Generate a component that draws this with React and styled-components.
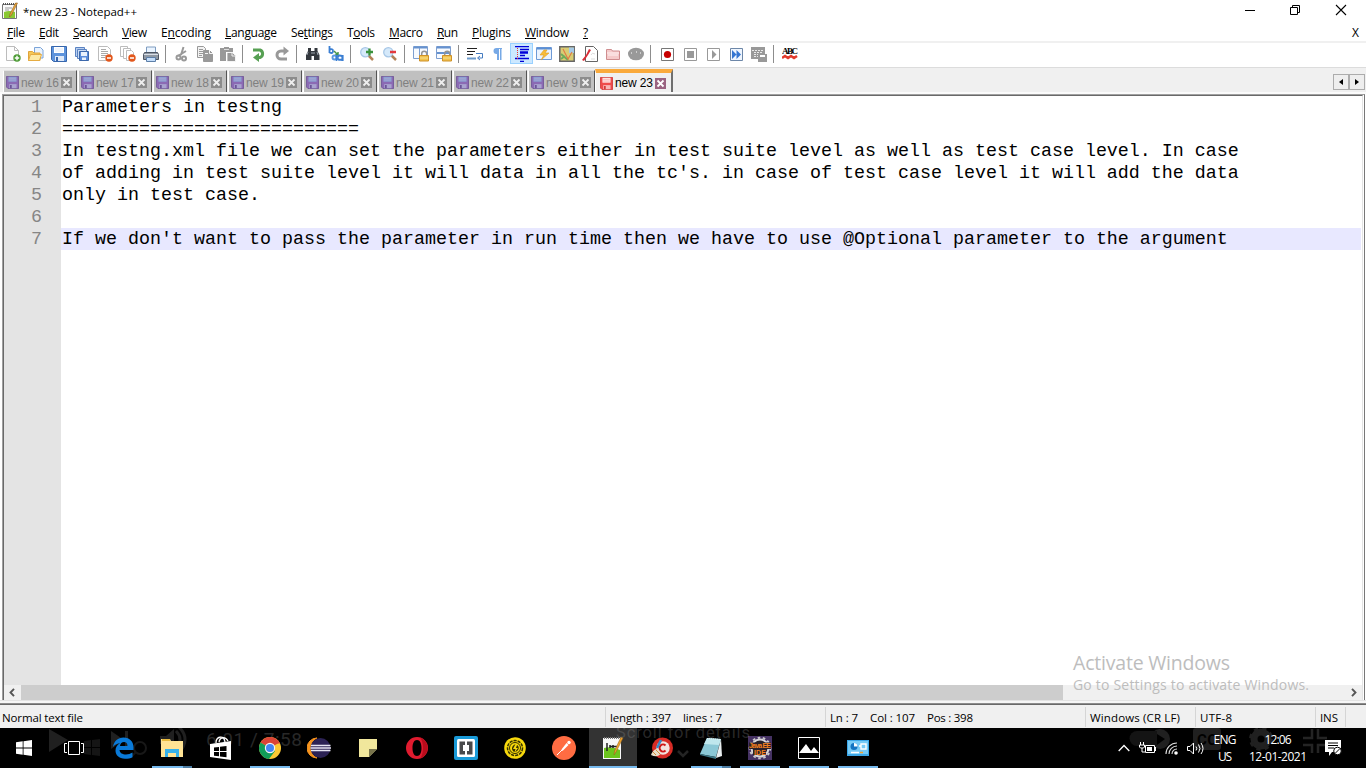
import React, { useLayoutEffect, useRef } from "react";
import styled, { createGlobalStyle, css } from "styled-components";

const UI = '"Open Sans", "Noto Sans", sans-serif';

const Global = createGlobalStyle`
  * { box-sizing: border-box; }
  html, body { margin: 0; padding: 0; overflow: hidden; background: #fff; }
  svg { display: block; flex: none; }
`;

const Screen = styled.div`
  position: relative;
  width: 1366px;
  height: 768px;
  overflow: hidden;
  display: flex;
  flex-direction: column;
  background: #fff;
  font: 12px/16px ${UI};
  color: #000;
`;

const FitBox = styled.span`
  display: inline-block;
  flex: none;
  white-space: pre;
  width: ${(p) => p.$w}px;
`;

/* Text that tracks itself to fill an exact width. */
function Fit({ w, children }) {
  const ref = useRef(null);
  useLayoutEffect(() => {
    const el = ref.current;
    el.style.letterSpacing = "0px";
    const natural = el.getBoundingClientRect().width;
    const n = Math.max(1, el.textContent.length - 1);
    el.style.letterSpacing = `${(w - natural) / n}px`;
  }, [w, children]);
  return (
    <FitBox $w={w}>
      <span ref={ref}>{children}</span>
    </FitBox>
  );
}

/* ---------- title and menu ---------- */
const TitleBar = styled.header`
  height: 22px;
  flex: none;
  display: flex;
  align-items: center;
  padding: 0 19px 0 2px;
`;
const TitleText = styled.div`
  margin: 2px auto 0 5px;
  font-size: 11.5px;
`;
const WindowButtons = styled.div`
  display: flex;
  gap: 34px;
  padding-bottom: 2px;
`;
const MenuBar = styled.nav`
  height: 21px;
  flex: none;
  display: flex;
  align-items: flex-start;
  padding: 3px 7px 0;
  gap: 14px;
  border-bottom: 2px solid #f0f0f0;
  font-size: 12px;
`;
const Key = styled.span`
  border-bottom: 1px solid #000;
  display: inline-block;
  height: 14px;
  line-height: 16px;
`;
const DocClose = styled.div`
  margin-left: auto;
`;

/* ---------- toolbar ---------- */
const Toolbar = styled.div`
  height: 25px;
  flex: none;
  display: flex;
  padding-left: 2px;
  border-bottom: 1px solid #dcdcdc;
`;
const Tool = styled.div`
  width: 23px;
  height: 21px;
  display: flex;
  align-items: center;
  justify-content: center;
  padding-right: 1px;
  ${(p) =>
    p.$on &&
    css`
      padding-right: 0;
      background: #cce8ff;
      border: 1px solid #99d1ff;
    `}
`;
const Sep = styled.div`
  width: 8px;
  height: 20px;
  padding: 2px 0 0 2px;
  &::before {
    content: "";
    display: block;
    width: 1px;
    height: 18px;
    background: #8d8d8d;
  }
`;

const Svg = ({ w = 16, h = 16, vb, children }) => (
  <svg width={w} height={h} viewBox={vb || `0 0 ${w} ${h}`} fill="none">
    {children}
  </svg>
);

const Floppy = ({ s = 16, body, dark, label = "#fff", metal = "#dfe9f8" }) => (
  <svg width={s} height={s} viewBox="0 0 16 16" fill="none">
    <path d="M.5.5h15v15H2.5l-2-2z" fill={body} stroke={dark} />
    <path d="M3 1h10v6H3z" fill={label} />
    <path d="M4 3h8M4 5h8" stroke={metal} />
    <path d="M4 10h9v5H4z" fill={metal} />
    <path d="M5 11h2v4H5z" fill={dark} />
  </svg>
);

const Minus = ({ x = 12, y = 12 }) => (
  <>
    <circle cx={x} cy={y} r="3.7" fill="#e2571c" />
    <path d={`M${x - 2} ${y}h4`} stroke="#fff" strokeWidth="1.5" />
  </>
);
const Lens = ({ plus }) => (
  <Svg>
    <path d="M9 9l5 5" stroke="#b38258" strokeWidth="2.5" />
    <circle cx="6.3" cy="6.3" r="4.6" fill="#d5e9fa" stroke="#a7c7e7" strokeWidth="1.3" />
    {plus ? (
      <path d="M10.5 2.5v7M7 6h7" stroke="#39923c" strokeWidth="2.3" />
    ) : (
      <path d="M8 6h6" stroke="#e3393d" strokeWidth="2.5" />
    )}
  </Svg>
);
const Lock = () => (
  <>
    <path d="M8.7 10V7.7a2.5 2.5 0 015 0V10" stroke="#949494" strokeWidth="1.5" />
    <path d="M6.5 9.5h9v5.5h-9z" fill="#f1c24c" stroke="#ce9128" />
    <path d="M7 12h8" stroke="#f9df8d" />
  </>
);
const G = "#999";

const toolGroups = [
  [
    <Svg>
      <path d="M1.5.5h8l4 4v10h-12z" fill="#fdfdfd" stroke="#bcbcbc" />
      <path d="M9.500.5v4h4" stroke="#bcbcbc" />
      <circle cx="12" cy="12" r="3.7" fill="#4d9b35" />
      <path d="M12 9.800v4.400M9.800 12h4.400" stroke="#fff" strokeWidth="1.4" />
    </Svg>,
    <Svg>
      <path d="M6.500 1.500h6l2.500 2.500v8h-8.500z" fill="#e9f2fd" stroke="#7ba4d8" />
      <path d="M.5 14.500v-9h4l1.500 1.500h6v7.500z" fill="#f5c758" stroke="#e0a43a" />
      <path d="M.5 14.500l2-6h11l-2 6z" fill="#fde9a6" stroke="#e6ac42" />
    </Svg>,
    <Floppy body="#5d93dc" dark="#3766ac" />,
    <Svg>
      <path d="M1.500 1.500h9v9h-9z" fill="#b9cff0" stroke="#5b83c2" />
      <path d="M3.500 3.500h9v9h-9z" fill="#cadcf5" stroke="#5b83c2" />
      <path d="M5.500 5.500h9v9h-9z" fill="#5b8ddb" stroke="#3d68ab" />
      <path d="M7 6h6v4H7zM8 11.500h4V14H8z" fill="#e9f1fc" />
    </Svg>,
    <Svg>
      <path d="M1.500.5h9l3 3v11h-12z" fill="#fff" stroke="#bcbcbc" />
      <path d="M4 3.500h5M4 5.500h7M4 7.500h7M4 9.500h5M4 11.500h4" stroke="#aaa" />
      <Minus />
    </Svg>,
    <Svg>
      <path d="M.5.5h7v10h-7z" fill="#fff" stroke="#bcbcbc" />
      <path d="M3.500 2.500h7v10h-7z" fill="#fff" stroke="#bcbcbc" />
      <path d="M6.500 4.500h5l2 2v8h-7z" fill="#fff" stroke="#bcbcbc" />
      <Minus />
    </Svg>,
    <Svg>
      <path d="M3.500 1h9v6h-9z" fill="#eaf4ff" stroke="#7e9cc0" />
      <path d="M1.500 6.500h13l1 2v5h-15v-5z" fill="#8f98a4" stroke="#4c5563" />
      <path d="M1 8.500h14" stroke="#d9dfe7" />
      <path d="M3.500 11.500h9v4h-9z" fill="#c5defb" stroke="#5d7fa8" />
    </Svg>,
  ],
  [
    <Svg>
      <path d="M9.500 1L7 9M12 5l-8 5" stroke={G} strokeWidth="2" />
      <circle cx="4.500" cy="11.500" r="2" stroke={G} strokeWidth="2" />
      <circle cx="10" cy="12.500" r="2" stroke={G} strokeWidth="2" />
    </Svg>,
    <Svg>
      <path d="M.5.5h6l2 2v9h-8z" fill="#f2f2f2" stroke={G} />
      <path d="M2 3.500h4M2 5.500h4M2 7.500h4M2 9.500h3" stroke={G} />
      <path d="M6.500 4.500h6l3 3v8h-9z" fill={G} stroke={G} />
      <path d="M12.500 4v3.500H16M8 7.500h3" stroke="#f4f4f4" />
    </Svg>,
    <Svg>
      <path d="M0 2h4V1h5v1h4v4H6v9H0z" fill={G} />
      <path d="M4 3.500h5" stroke="#ddd" />
      <path d="M7 6.500h5.500l3 3V15.500H7z" fill={G} stroke="#fff" strokeWidth=".8" />
      <path d="M12 6.500V10h4" stroke="#eee" />
    </Svg>,
  ],
  [
    <Svg>
      <path d="M2 4h7a4 4 0 010 7.500H6" stroke="#57a053" strokeWidth="3" />
      <path d="M8 7v9l-6-4.500z" fill="#57a053" />
    </Svg>,
    <Svg>
      <path d="M13 13H7a4 4 0 010-8h4" stroke={G} strokeWidth="3" />
      <path d="M9.500.5v9L15 5z" fill={G} />
    </Svg>,
  ],
  [
    <Svg>
      <path d="M3 2h3v3h3.500V2h3v3l2 4v5H9v-4H6.500v4H1V9l2-4z" fill="#34383e" />
      <path d="M3 6l-1 3M12 6l1 3M6 7h4" stroke="#9ba3ad" />
    </Svg>,
    <Svg>
      <path d="M1.500 0v7M1.500 4q3.500-2 3.500 1t-3.500 1.500" stroke="#3b7fd3" strokeWidth="1.800" />
      <path d="M6 5l4 4m0-3v3H7" stroke="#47954b" strokeWidth="1.500" />
      <path d="M14.500 9v6M14 10q-4-1.500-4.500 1.500t5 2" stroke="#3b7fd3" strokeWidth="2.200" />
      <circle cx="6.500" cy="11.500" r="2" stroke="#5d9ae0" strokeWidth="1.900" />
      <path d="M8.500 9v6" stroke="#3b7fd3" strokeWidth="1.600" />
    </Svg>,
  ],
  [<Lens plus />, <Lens />],
  [
    <Svg>
      <path d="M.5.5h14v12H.5z" fill="#f7faff" stroke="#7d9fd0" />
      <path d="M1 1.500h13" stroke="#6692cf" strokeWidth="2" />
      <path d="M6.500 2v10" stroke="#7d9fd0" />
      <Lock />
    </Svg>,
    <Svg>
      <path d="M.5.5h14v12H.5z" fill="#f7faff" stroke="#7d9fd0" />
      <path d="M1 1.500h13M1 7h13" stroke="#6692cf" strokeWidth="2" />
      <Lock />
    </Svg>,
  ],
  [
    <Svg>
      <path d="M0 2.500h10M0 5.500h8M0 8.500h6" stroke="#222" strokeWidth="1.200" />
      <path d="M9 7.500h6.500V12H11m2-2l-2.500 2 2.500 2" stroke="#457cc1" />
      <path d="M0 12.500h9" stroke="#6c9acb" strokeWidth="2" />
    </Svg>,
    <Svg>
      <path d="M12 2H6.500a3 3 0 000 6H7v6h2V3h1v11h1.500V3h.5z" fill="#77a9e6" />
    </Svg>,
    <Svg>
      <path d="M1 .5h14M6 3.500h9M6 9.500h5M1 12.500h14M6 15.500h4" stroke="#0000d8" strokeWidth="1.500" />
      <path d="M6 6.500h8" stroke="#0000d8" strokeWidth="2.500" />
      <path d="M3.500 2v11" stroke="#e33" strokeDasharray="1 1" />
    </Svg>,
    <Svg>
      <path d="M.5 1.500h15v12H.5z" fill="#eaf3ff" stroke="#6e9ad6" />
      <path d="M1 2.500h14" stroke="#5b8fd4" strokeWidth="2" />
      <path d="M8 4L4 9h4l-3 5 8-7H9l2-3z" fill="#f8bd38" stroke="#df9a22" strokeWidth=".6" />
    </Svg>,
    <Svg>
      <path d="M.8.8h14.400v14.400H.8z" fill="#d9cd74" stroke="#666" strokeWidth="1.500" />
      <path d="M10 1.500h5V7h-5z" fill="#a5c9e6" />
      <path d="M2 8l7 6M2 13l4-3" stroke="#6eab5b" strokeWidth="2" />
      <path d="M4 3l5 10 4-7" stroke="#e07a46" strokeWidth="1.100" />
    </Svg>,
    <Svg>
      <path d="M3.500.5h8l4 4v11h-12z" fill="#fff" stroke="#666" />
      <path d="M0 14l4-5 3-6 2 1-3 5-4 6z" fill="#d92d36" />
      <path d="M9 9q1-3 4-1M9 13h4" stroke="#ddd" />
    </Svg>,
    <Svg>
      <path d="M1.500 13.500v-10h5l1 1.500h7v8.500z" fill="#f5caca" stroke="#cf8d8f" />
      <path d="M2 7h12M3 9h10" stroke="#fff2f2" />
    </Svg>,
    <Svg>
      <ellipse cx="8" cy="8" rx="8" ry="6.300" fill={G} />
      <path d="M3 7h1M8 6h1M12 7h1" stroke="#fff" />
    </Svg>,
  ],
  [
    <Svg><path d="M2.500 2.500h12v12h-12z" fill="#fff" stroke="#777" /><circle cx="8.500" cy="8.500" r="3.600" fill="#c80000" /></Svg>,
    <Svg><path d="M2.500 2.500h12v12h-12z" fill="#fff" stroke="#999" /><path d="M5 5h7v7H5z" fill={G} /></Svg>,
    <Svg><path d="M2.500 2.500h12v12h-12z" fill="#fff" stroke="#999" /><path d="M7 4v9l4.500-4.500z" fill={G} /></Svg>,
    <Svg><path d="M2.500 2.500h12v12h-12z" fill="#eff6ff" stroke="#6d87a8" /><path d="M4 4v9l4.500-4.500zM8.500 4v9L13 8.500z" fill="#3576d2" /></Svg>,
    <Svg>
      <path d="M0 1h14v12H0z" fill={G} />
      <path d="M1 4.500h12M3 6.500h8M3 8.500h4M3 10.500h4" stroke="#e9e9e9" strokeDasharray="2 1" />
      <path d="M7 8h9v8H7z" fill={G} /><path d="M9 9h5v2H9z" fill="#fff" />
    </Svg>,
  ],
  [
    <Svg>
      <text x="0" y="8" textLength="16" fontFamily="Liberation Serif, serif" fontWeight="700" fontSize="9" fill="#000">ABC</text>
      <path d="M0 12l3-2 3 2 3-2 3 2 3-2" stroke="#e23a2c" strokeWidth="2.600" />
    </Svg>,
  ],
];

/* ---------- tabs ---------- */
const TabStrip = styled.div`
  height: 26px;
  flex: none;
  display: flex;
  align-items: flex-end;
  background: #f0f0f0;
  border-bottom: 2px solid #fbfbfb;
  padding: 0 1px 0 3px;
  font: 12px/14px "Liberation Sans", sans-serif;
`;
const Tab = styled.div`
  width: ${(p) => p.$w}px;
  height: 22px;
  display: flex;
  align-items: center;
  padding: 2px 0 0 2px;
  gap: 2px;
  color: #808080;
  background: #c0c0c0;
  border-left: 1px solid #fff;
  border-top: 1px solid #e2e2e2;
  border-right: 1px solid #555;
  margin-right: ${(p) => p.$gap ?? 2}px;
  ${(p) =>
    p.$active &&
    css`
      height: 23px;
      padding: 1px 0 0 4px;
      color: #000;
      background: #f0f0f0;
      border-top: 4px solid #faaa3c;
      border-right: 2px solid #6f6f6f;
    `}
`;
const CloseBox = ({ active }) => (
  <svg width="11" height="11" viewBox="0 0 11 11">
    <rect width="11" height="11" fill={active ? "#9a6381" : "#8c8c8c"} />
    <path d="M2.500 2.500l6 6m0-6l-6 6" stroke={active ? "#fff" : "#eee"} strokeWidth="1.800" />
  </svg>
);
const TabArrows = styled.div`
  display: flex;
  margin: 0 0 2px auto;
`;
const ArrowBtn = styled.div`
  width: 16px;
  height: 16px;
  border: 1px solid #acacac;
  background: #eee;
  display: flex;
  align-items: center;
  justify-content: center;
`;

/* ---------- editor ---------- */
const EditorFrame = styled.main`
  flex: 1;
  margin: 0 1px 0 2px;
  border: 1px solid #a0a0a0;
  border-right-color: #777;
  border-bottom: 0;
  display: flex;
  padding-right: 1px;
`;
const EditorInner = styled.div`
  flex: 1;
  border: 1px solid #696969;
  border-right: 1px solid #e3e3e3;
  border-bottom: 0;
  display: flex;
  flex-direction: column;
`;
const Lines = styled.div`
  flex: 1;
  font: 18.333px/22px "Liberation Mono", monospace;
  background: linear-gradient(90deg, #e4e4e4 57px, #fff 57px);
`;
const Line = styled.div`
  display: flex;
  height: 22px;
  line-height: 23px;
  white-space: pre;
  padding-right: 1px;
`;
const Num = styled.span`
  width: 57px;
  padding-right: 19px;
  text-align: right;
  color: #868686;
`;
const Code = styled.span`
  flex: 1;
  height: 22px;
  padding-left: 1px;
  background: ${(p) => (p.$current ? "#e8e8ff" : "#fff")};
`;
const HScroll = styled.div`
  height: 15px;
  flex: none;
  display: flex;
  align-items: center;
  background: #f0f0f0;
`;
const ScrollBtn = styled.div`
  width: ${(p) => p.$w}px;
  display: flex;
  justify-content: center;
`;
const Thumb = styled.div`
  width: 1042px;
  height: 15px;
  background: #cdcdcd;
  margin-right: auto;
`;
const FrameBottom = styled.div`
  height: 5px;
  flex: none;
  background: linear-gradient(#e3e3e3 1px, #f6f6f6 1px 3px, #8c8c8c 3px 4px, #696969 4px);
`;

/* ---------- status ---------- */
const Status = styled.footer`
  height: 23px;
  flex: none;
  display: flex;
  align-items: center;
  background: #f0f0f0;
  font-size: 11.500px;
`;
const Cell = styled.div`
  width: ${(p) => p.$w}px;
  height: 20px;
  display: flex;
  align-items: center;
  gap: ${(p) => p.$gap || 0}px;
  padding: 2px 0 0 ${(p) => p.$pl ?? 4}px;
  border-right: 1px solid #d5d5d5;
`;

const Watermark = styled.div`
  position: absolute;
  left: 1073px;
  top: 650px;
  color: #bdbdbd;
  font-size: 14px;
  line-height: 20px;
`;
const WatermarkTitle = styled.div`
  font-size: 19.500px;
  line-height: 25px;
`;

/* ---------- taskbar ---------- */
const Taskbar = styled.div`
  position: relative;
  height: 40px;
  flex: none;
  display: flex;
  background: #000;
  overflow: hidden;
  color: #fff;
`;
const Ghost = styled.div`
  position: absolute;
  inset: 0;
`;
const TaskButton = styled.div`
  position: relative;
  width: ${(p) => p.$w || 49}px;
  height: 40px;
  display: flex;
  align-items: center;
  justify-content: center;
  padding-right: 1px;
  background: ${(p) => (p.$active ? "linear-gradient(90deg, #333 48px, transparent 48px)" : "none")};
  &::after {
    content: "";
    display: ${(p) => (p.$line ? "block" : "none")};
    position: absolute;
    bottom: 0;
    left: ${(p) => (p.$active ? 0 : 4)}px;
    width: ${(p) => (p.$active ? 48 : 40)}px;
    height: 2px;
    background: ${(p) =>
      p.$line === "multi" ? "linear-gradient(90deg, #76b9ed 31px, #4c7ca2 31px)" : "#76b9ed"};
  }
`;
const Tray = styled.div`
  position: relative;
  display: flex;
  align-items: center;
  margin-left: auto;
  padding-right: 3px;
`;
const TrayIcons = styled.div`
  display: flex;
  align-items: center;
  gap: 9px;
  margin-right: 9px;
`;
const TrayText = styled.div`
  width: ${(p) => p.$w}px;
  display: flex;
  flex-direction: column;
  align-items: center;
  font-size: 12px;
  line-height: 17px;
  padding-bottom: ${(p) => (p.$up ? 1 : 0)}px;
`;
const Notify = styled.div`
  margin: 0 21px 0 6px;
`;

const apps = [
  { w: 49, icon: <Svg><path d="M0 2.300l6.700-1V7.500H0zM7.500 1.200L16 0v7.500H7.500zM0 8.500h6.700v6.200L0 13.700zM7.500 8.500H16V16l-8.500-1.200z" fill="#fff" /></Svg> },
  { w: 50, icon: <Svg w={24} h={14}><path d="M6.500.5h11v13h-11zM5 2.500H2.500v9H5M19 2.500h2.500v9H19" stroke="#fff" /></Svg> },
  { icon: <Svg w={22} h={22}><path d="M1 10C2 4 6 .5 11.500.5 18 .5 21.500 5 21.500 10v3H7.500c.3 3 3 4.500 6.500 4.500 2.500 0 4.500-.7 6.500-2v4.700c-2 1-4.500 1.500-7.500 1.500-6 0-9.500-3.500-9.500-8.200 0-3.200 1.700-5.700 4.500-7.200C5.500 6.500 3 7.500 1 10zm7-1h7.500c0-2.500-1.200-4-3.500-4-2.200 0-3.700 1.500-4 4z" fill="#0a7ad8" fillRule="evenodd" /></Svg> },
  { line: "multi", icon: <Svg w={22} h={20}><path d="M0 1h9l1 2h12v16H0z" fill="#ffe394" /><path d="M1 1h8v2H1z" fill="#e7b93c" /><path d="M4 19v-8h14v8h-3v-4H7v4z" fill="#36b1ea" /></Svg> },
  { icon: <Svg w={22} h={24}><path d="M6 7C6 0 14-1 15 6M9 6c1-5 6-6 9-1" stroke="#fff" strokeWidth="1.300" /><path d="M0 8l21-3v19L0 21z" fill="#fff" /><path d="M4 11.500l5-.6V15H4zM10 10.700l6.500-.8V15H10zM4 16h5v4.300l-5-.6zM10 16h6.500v5.200L10 20.400z" fill="#000" /></Svg> },
  { line: 1, icon: <Svg w={22} h={22}><circle cx="11" cy="11" r="11" fill="#fcc934" /><path d="M11 11L1.500 5.500A11 11 0 0120.500 5.500z" fill="#db4437" /><path d="M11 11L1.500 5.500A11 11 0 0010 22l6-8z" fill="#109d58" /><path d="M11 6h9.800" stroke="#db4437" strokeWidth="1" /><circle cx="11" cy="11" r="5.200" fill="#f4f4f4" /><circle cx="11" cy="11" r="4" fill="#4285f4" /></Svg> },
  { icon: <Svg w={24} h={22}><path d="M10 1a10 10 0 000 20A11 11 0 0110 1z" fill="#f7941e" stroke="#f7941e" /><circle cx="13.500" cy="11" r="10" fill="#2c2255" /><path d="M4 8.500h19.500M3.500 11h20.500M4 13.500h19.500" stroke="#e7e5f3" strokeWidth="1.300" /></Svg> },
  { icon: <Svg w={18} h={18}><path d="M0 0h18v10l-8 8H0z" fill="#f1e79c" /><path d="M10 18v-8h8z" fill="#77734b" /></Svg> },
  { icon: <Svg w={22} h={22}><path fillRule="evenodd" d="M11 0a11 11 0 100 22 11 11 0 000-22zm0 3c3 0 4.500 3.500 4.500 8S14 19 11 19s-4.500-3.500-4.500-8S8 3 11 3z" fill="#e01b2f" /><path d="M14 .5A11 11 0 0114 21.500C18 17 18 5 14 .5z" fill="#b80c1c" /></Svg> },
  { icon: <Svg w={24} h={24}><rect width="24" height="24" rx="2" fill="#199ad8" /><rect x="3" y="3" width="18" height="18" rx="1.500" fill="#fff" /><path d="M11 5.500H5.500v13H11v-3.500H9V9h2zM13 5.500h5.500v13H13v-3.500h2V9h-2z" fill="#48494b" /></Svg> },
  { icon: <Svg w={22} h={22}><circle cx="11" cy="11" r="10.800" fill="#f7d80c" /><circle cx="11" cy="11" r="7.500" stroke="#333000" strokeWidth="1.500" strokeDasharray="3.200 1" /><circle cx="11" cy="11" r="5.500" stroke="#333000" /><path d="M11.500 7c-5 2-4 7-1 8l1-3H9zM11 15c4-1 5-5 2-7l-1 3h2z" fill="#333000" /></Svg> },
  { icon: <Svg w={24} h={24}><circle cx="12" cy="12" r="12" fill="#ff6c42" /><path d="M5 19l6-6" stroke="#fff" /><path d="M9.500 13.500l5-6.500 2 2-6 6z" fill="#fff" /><circle cx="17" cy="6.500" r="1.700" fill="#fff" /></Svg> },
  { active: 1, line: 1, icon: <Svg w={22} h={24}><path d="M1 2h18v21H1z" fill="#f8f8f8" /><path d="M2 12q8-2 16 2v8H2z" fill="#6cc51d" /><path d="M2 2h17" stroke="#777" strokeWidth="2" strokeDasharray="1 1" /><path d="M5 7v8M8 9v3M11 9v3M8 10.500h7" stroke="#222" strokeWidth="1.500" /><path d="M21 2l-7 14-2 3 .5-4L19 1z" fill="#eea02c" stroke="#8b601d" strokeWidth=".5" /></Svg> },
  { icon: <Svg w={22} h={22}><circle cx="11.500" cy="11" r="10.500" fill="#d72b25" /><circle cx="12" cy="11" r="6.700" fill="#f3e3df" /><path d="M14.500 8.500a3.500 3.500 0 100 5" stroke="#cf1818" strokeWidth="2" /><path d="M0 18c2-5 4-6 7-6l3 4c-2 4-6 4-10 2z" fill="#e8dfc8" /><path d="M6 11l4-8" stroke="#3b88c7" strokeWidth="2.500" /><path d="M2 15l3 3M5 13l4 4" stroke="#d58a3b" /></Svg> },
  { line: "multi", icon: <Svg w={24} h={22}><path d="M8 1l14 1-5 18L1 17z" fill="#8bc8d6" /><path d="M8 1l14 1-2 6L5 7z" fill="#bfe7ed" /><path d="M22 2l1 17-6 2z" fill="#e9eff0" /><path d="M1 17l16 3v2L1 18z" fill="#3d7988" /><path d="M8 1.500l14 1" stroke="#e7f1f3" strokeDasharray="1 1" /></Svg> },
  { line: 1, icon: <Svg w={24} h={24}><path d="M0 0h24v24H0z" fill="#453263" /><circle cx="12" cy="12" r="8.500" fill="#24202b" stroke="#d9d7da" strokeWidth="2" /><circle cx="12" cy="12" r="10.300" stroke="#c9c7cb" strokeWidth="2" strokeDasharray="2.600 2.500" /><path d="M1 6.500h22v6.500H1zM5 13h13v6H5z" fill="#2a2029" /><text x="1" y="12" textLength="22" fontFamily="Liberation Sans, sans-serif" fontWeight="700" fontSize="7" fill="#f58220">Java EE</text><text x="6" y="18.500" textLength="12" fontFamily="Liberation Sans, sans-serif" fontWeight="700" fontSize="7" fill="#f58220">IDE</text></Svg> },
  { line: 1, icon: <Svg w={22} h={22}><path d="M.5.5h21v21H.5z" stroke="#fff" /><path d="M1 16l7-9 5 7 3-4 5 6v0H1z" fill="#fff" /></Svg> },
  { line: 1, icon: <Svg w={22} h={16}><path d="M0 0h22v16H0z" fill="#3ba7e8" /><path d="M1 1h20v13H1z" fill="#78cbf6" /><circle cx="7" cy="6.500" r="3.500" fill="#1574c1" /><path d="M7 6.500V3a3.500 3.500 0 013.500 3.500z" fill="#fff" /><path d="M14 4h5v5h-5zM12 6h2M4 12.500h8" stroke="#fff" strokeWidth="1.400" /><path d="M13 12.500h3" stroke="#eda338" strokeWidth="1.500" /></Svg> },
];

const menus = [
  ["", "F", "ile", 18], ["", "E", "dit", 20], ["", "S", "earch", 35], ["", "V", "iew", 25],
  ["E", "n", "coding", 50], ["", "L", "anguage", 52], ["Se", "t", "tings", 42], ["T", "o", "ols", 28],
  ["", "M", "acro", 34], ["", "R", "un", 21], ["", "P", "lugins", 39], ["", "W", "indow", 44], ["", "?", "", 5],
];

const lines = [
  "Parameters in testng",
  "===========================",
  "In testng.xml file we can set the parameters either in test suite level as well as test case level. In case",
  "of adding in test suite level it will data in all the tc's. in case of test case level it will add the data",
  "only in test case.",
  "",
  "If we don't want to pass the parameter in run time then we have to use @Optional parameter to the argument",
];

const tabs = ["new 16", "new 17", "new 18", "new 19", "new 20", "new 21", "new 22", "new 9"];

export default function App() {
  return (
    <Screen>
      <Global />
      <TitleBar>
        <Svg w={16} h={18}>
          <path d="M.5 2.500h14v14H.5z" fill="#fafafa" stroke="#777" />
          <path d="M1 2h13" stroke="#555" strokeWidth="2" strokeDasharray="1 1" />
          <path d="M2 10q5-2 11 0v6H2z" fill="#8ac832" />
          <path d="M3 6h7M3 8h4" stroke="#999" />
          <path d="M15.500 1l-6 12-2 2 .5-3 5.500-11z" fill="#edaa3b" stroke="#8d5a22" strokeWidth=".6" />
        </Svg>
        <TitleText><Fit w={114}>*new 23 - Notepad++</Fit></TitleText>
        <WindowButtons>
          <Svg w={12} h={12}><path d="M2 6.500h10" stroke="#000" /></Svg>
          <Svg w={12} h={12}><path d="M1.500 3.500h7v7h-7zM3.500 3V1.500h7v7H9" stroke="#000" /></Svg>
          <Svg w={12} h={12}><path d="M1 1l10 10M11 1L1 11" stroke="#000" strokeWidth="1.100" /></Svg>
        </WindowButtons>
      </TitleBar>
      <MenuBar>
        {menus.map(([a, k, b, w]) => (
          <Fit key={a + k + b} w={w}>{a}<Key>{k}</Key>{b}</Fit>
        ))}
        <DocClose><Fit w={7}>X</Fit></DocClose>
      </MenuBar>
      <Toolbar>
        {toolGroups.map((group, g) => (
          <React.Fragment key={g}>
            {g > 0 && <Sep />}
            {group.map((icon, i) => (
              <Tool key={i} $on={g === 6 && i === 2}>{icon}</Tool>
            ))}
          </React.Fragment>
        ))}
      </Toolbar>
      <TabStrip>
        {tabs.map((t, i) => (
          <Tab key={t} $w={i === 7 ? 67 : 74} $gap={i === 7 ? 0 : 1}>
            <Floppy s={13} body="#8b6ab4" dark="#674f93" label="#8ba3d4" metal="#a9a3cf" />
            <Fit w={i === 7 ? 32 : 38}>{t}</Fit>
            <CloseBox />
          </Tab>
        ))}
        <Tab $active $w={78}>
          <Floppy s={13} body="#ef4b4b" dark="#cf3030" label="#ffe3e3" metal="#f7b6b6" />
          <Fit w={38}>new 23</Fit>
          <CloseBox active />
        </Tab>
        <TabArrows>
          <ArrowBtn><Svg w={4} h={6}><path d="M4 0v6L0 3z" fill="#000" /></Svg></ArrowBtn>
          <ArrowBtn><Svg w={4} h={6}><path d="M0 0v6l4-3z" fill="#000" /></Svg></ArrowBtn>
        </TabArrows>
      </TabStrip>
      <EditorFrame>
        <EditorInner>
          <Lines>
            {lines.map((l, i) => (
              <Line key={i}><Num>{i + 1}</Num><Code $current={i === 6}>{l}</Code></Line>
            ))}
          </Lines>
          <HScroll>
            <ScrollBtn $w={17}><Svg w={7} h={9}><path d="M5 .8L1.500 4.500 5 8.200" stroke="#555" strokeWidth="1.900" /></Svg></ScrollBtn>
            <Thumb />
            <ScrollBtn $w={16}><Svg w={6} h={9}><path d="M1 .8l3.500 3.700L1 8.200" stroke="#555" strokeWidth="1.900" /></Svg></ScrollBtn>
          </HScroll>
        </EditorInner>
      </EditorFrame>
      <FrameBottom />
      <Status>
        <Cell $w={606} $pl={2}><Fit w={81}>Normal text file</Fit></Cell>
        <Cell $w={220} $gap={12}><Fit w={61}>length : 397</Fit><Fit w={39}>lines : 7</Fit></Cell>
        <Cell $w={260} $gap={12}><Fit w={28}>Ln : 7</Fit><Fit w={45}>Col : 107</Fit><Fit w={46}>Pos : 398</Fit></Cell>
        <Cell $w={110}><Fit w={90}>Windows (CR LF)</Fit></Cell>
        <Cell $w={120}><Fit w={32}>UTF-8</Fit></Cell>
        <Cell $w={30}><Fit w={18}>INS</Fit></Cell>
      </Status>
      <Taskbar>
        <Ghost>
          <svg width="1366" height="40" viewBox="0 0 1366 40" fill="none">
            <g fill="#202020">
              <path d="M49 1l19 11-19 12zM111 3l13 9-13 9zM125 3h3v18h-3zM160 8h6l8-7v22l-8-7h-6z" />
              <path d="M84 13l7-1v7h-7zM92 12l8-1v8h-8zM84 20h7v7l-7-1zM92 20h8v8l-8-1z" fill="#151515" />
              <circle cx="1160" cy="11" r="10" />
              <path d="M1137 3h20v15h-20a7 7 0 010-15z" fill="#141414" />
              <path d="M1157 6l8 5-8 6z" fill="#000" />
              <rect x="1193" y="0" width="28" height="22" rx="3" />
              <circle cx="1261" cy="11" r="7" stroke="#202020" strokeWidth="7" fill="none" />
              <circle cx="1261" cy="11" r="10" stroke="#202020" strokeWidth="4" strokeDasharray="4 4" fill="none" />
            </g>
            <path d="M176 3q8 8 0 18M178-2q14 13 0 28" stroke="#202020" strokeWidth="3" />
            <circle cx="140" cy="20" r="6" stroke="#181818" strokeWidth="2" /><path d="M136 24l-5 5" stroke="#181818" strokeWidth="2" />
            <path d="M1303 10h9V1M1318 1v9h9M1303 17h9v8M1318 25v-8h9M678 23l5 5 5-5" stroke="#242424" strokeWidth="2.500" />
            <text x="206" y="18" textLength="96" fontFamily="Roboto, sans-serif" fontSize="19" fill="#282828">6:01 / 7:58</text>
            <text x="1197" y="17" textLength="20" fontFamily="Roboto, sans-serif" fontWeight="700" fontSize="15" fill="#000">CC</text>
          </svg>
        </Ghost>
        {apps.map((a, i) => (
          <TaskButton key={i} $w={a.w} $active={a.active} $line={a.line}>{a.icon}</TaskButton>
        ))}
        <Ghost>
          <svg width="1366" height="40" viewBox="0 0 1366 40">
            <text x="616" y="10" textLength="134" fontFamily="Roboto, sans-serif" fontSize="16.500" fill="#8a8a8a" fillOpacity=".3">Scroll for details</text>
          </svg>
        </Ghost>
        <Tray>
          <TrayIcons>
            <Svg w={12} h={8}><path d="M.7 7L6 1.500 11.300 7" stroke="#fff" strokeWidth="1.300" /></Svg>
            <Svg w={17} h={12}><path d="M6.500 3.500h9v7h-9z" stroke="#fff" /><path d="M8 5h5v4H8zM15 5h2v4h-2z" fill="#fff" /><path d="M1.500 0v3M4.500 0v3M.5 3h5v2l-1 1h-3l-1-1zM3 6v4h3" stroke="#fff" /></Svg>
            <Svg w={13} h={13}><path d="M1 12A11 11 0 0112 1M4 12a8 8 0 018-8M7 12a5 5 0 015-5" stroke="#ddd" strokeWidth="1.100" /><circle cx="11" cy="11" r="1.800" fill="#fff" /></Svg>
            <Svg w={17} h={13}><path d="M.5 4.500H3l3.500-3.500v11L3 8.500H.5z" stroke="#fff" /><path d="M9 4.500q1.500 2 0 4M11.500 2.500q3 4 0 8M14 1q4 5.500 0 11" stroke="#fff" /></Svg>
          </TrayIcons>
          <TrayText $w={24}><Fit w={23}>ENG</Fit><Fit w={14}>US</Fit></TrayText>
          <TrayText $w={82} $up><Fit w={27}>12:06</Fit><Fit w={58}>12-01-2021</Fit></TrayText>
          <Notify>
            <Svg w={17} h={16}><path d="M0 0h16v12H7l-3 4v-4H0z" fill="#fff" /><path d="M3 3h10M3 5.500h10M3 8h6" stroke="#000" /><circle cx="12.500" cy="11" r="3.800" fill="#fff" stroke="#000" /><path d="M10 13.500l5-5" stroke="#000" /></Svg>
          </Notify>
        </Tray>
      </Taskbar>
      <Watermark>
        <WatermarkTitle><Fit w={157}>Activate Windows</Fit></WatermarkTitle>
        <Fit w={236}>Go to Settings to activate Windows.</Fit>
      </Watermark>
    </Screen>
  );
}
